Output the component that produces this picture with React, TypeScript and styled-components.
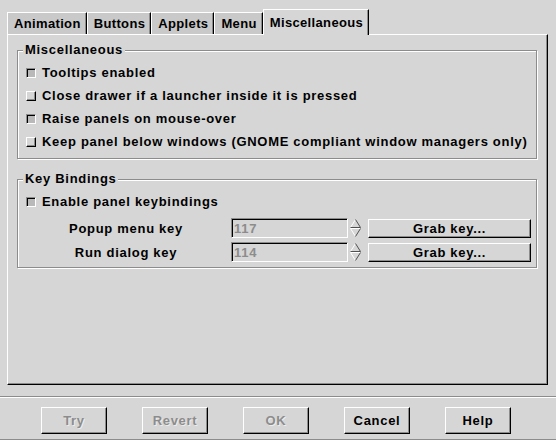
import React from "react";
import styled, { createGlobalStyle, css } from "styled-components";

const GlobalStyle = createGlobalStyle`
  html, body { margin: 0; padding: 0; background: #d6d6d6; }
  body { width: 556px; height: 440px; overflow: hidden; }
`;

const raised = css`
  border: 1px solid;
  border-color: #fff #000 #000 #fff;
  box-shadow: inset -1px -1px 0 #8c8c8c;
  background: #d6d6d6;
`;

const Window = styled.div`
  width: 556px;
  height: 440px;
  box-sizing: border-box;
  display: flex;
  flex-direction: column;
  background: #d6d6d6;
  font-family: "Liberation Sans", Arial, sans-serif;
  font-weight: bold;
  font-size: 13px;
  letter-spacing: 0.7px;
  color: #000;
  border-bottom: 1px solid #8c8c8c;
`;

const Notebook = styled.div`
  padding: 9px 8px 0 7px;
  display: flex;
  flex-direction: column;
`;

const TabRow = styled.div`
  display: flex;
  align-items: flex-end;
  height: 25px;
  letter-spacing: 0.35px;
`;

const Tab = styled.div<{ $active?: boolean }>`
  box-sizing: border-box;
  display: flex;
  align-items: center;
  padding: 0 5px 0 6px;
  border-top: 1px solid #fff;
  border-left: 1px solid #fff;
  border-right: 1px solid #000;
  box-shadow: inset -1px 0 0 #8c8c8c;
  height: ${(p) => (p.$active ? "26px" : "22px")};
  margin-bottom: ${(p) => (p.$active ? "-1px" : "0")};
  background: ${(p) => (p.$active ? "#d6d6d6" : "#c9c9c9")};
  position: relative;
  z-index: ${(p) => (p.$active ? 1 : 0)};
`;

const Panel = styled.div`
  height: 351px;
  box-sizing: border-box;
  border-top: 1px solid #fff;
  border-left: 1px solid #fff;
  border-right: 1px solid #000;
  border-bottom: 1px solid #000;
  box-shadow: inset -1px -1px 0 #8c8c8c;
  padding: 15px 10px 0 9px;
  display: flex;
  flex-direction: column;
`;

const Frame = styled.div<{ $gap?: number }>`
  display: flex;
  flex-direction: column;
  border: 1px solid #8c8c8c;
  box-shadow: inset 1px 1px 0 #fff, 1px 1px 0 #fff;
  padding: 0 5px 5px 8px;
  margin-top: ${(p) => p.$gap ?? 0}px;
`;

const Legend = styled.div`
  align-self: flex-start;
  margin: -8px 0 4px -3px;
  padding: 0 2px;
  height: 14px;
  line-height: 14px;
  background: #d6d6d6;
`;

const CheckRow = styled.div`
  display: flex;
  align-items: center;
  gap: 6px;
  height: 23px;
`;

const Check = styled.span<{ $checked?: boolean }>`
  width: 10px;
  height: 10px;
  box-sizing: border-box;
  flex: none;
  border: 1px solid;
  ${(p) =>
    p.$checked
      ? css`
          border-color: #8c8c8c #fff #fff #8c8c8c;
          box-shadow: inset 1px 1px 0 #000;
          background: #b9b9b9;
        `
      : css`
          border-color: #fff #000 #000 #fff;
          box-shadow: inset -1px -1px 0 #8c8c8c;
          background: #d6d6d6;
        `}
`;

const KeyGrid = styled.div`
  display: grid;
  grid-template-columns: 205px 117px 20px 1fr;
  grid-auto-rows: 20px;
  row-gap: 4px;
  margin-top: 5px;
  align-items: center;
`;

const KeyLabel = styled.div`
  text-align: center;
  padding-right: 5px;
`;

const Entry = styled.div`
  box-sizing: border-box;
  height: 20px;
  border: 1px solid;
  border-color: #8c8c8c #fff #fff #8c8c8c;
  box-shadow: inset 1px 1px 0 #000, inset -1px -1px 0 #d6d6d6;
  padding: 0 1px 0 2px;
  display: flex;
  align-items: center;
  color: #8c8c8c;
`;

const Spin = styled.svg`
  margin-left: 2px;
  display: block;
`;

const GrabButton = styled.div`
  ${raised};
  box-sizing: border-box;
  height: 19px;
  display: flex;
  align-items: center;
  justify-content: center;
`;

const Separator = styled.div`
  margin-top: 11px;
  border-top: 1px solid #8c8c8c;
  border-bottom: 1px solid #fff;
`;

const ButtonRow = styled.div`
  display: flex;
  gap: 35px;
  padding: 9px 0 0 41px;
`;

const DialogButton = styled.div<{ $disabled?: boolean }>`
  ${raised};
  box-sizing: border-box;
  width: 66px;
  height: 27px;
  display: flex;
  align-items: center;
  justify-content: center;
  color: ${(p) => (p.$disabled ? "#8c8c8c" : "#000")};
  text-shadow: ${(p) => (p.$disabled ? "1px 1px 0 #ececec" : "none")};
`;

const SpinArrows = () => (
  <Spin width="11" height="18" viewBox="0 0 11 18" fill="none" strokeWidth="1">
    <path d="M5.5 0.5 L0.5 8.5" stroke="#fff" />
    <path d="M5.5 0.5 L10.5 8.5 L0.5 8.5" stroke="#505050" />
    <path d="M0.5 9.5 L10.5 9.5" stroke="#fff" />
    <path d="M0.5 9.5 L5.5 17.5" stroke="#fff" />
    <path d="M10.5 9.5 L5.5 17.5" stroke="#505050" />
  </Spin>
);

const tabs = ["Animation", "Buttons", "Applets", "Menu", "Miscellaneous"];

const misc = [
  { label: "Tooltips enabled", checked: true },
  { label: "Close drawer if a launcher inside it is pressed", checked: false },
  { label: "Raise panels on mouse-over", checked: true },
  { label: "Keep panel below windows (GNOME compliant window managers only)", checked: false },
];

const keys = [
  { label: "Popup menu key", value: "117" },
  { label: "Run dialog key", value: "114" },
];

const buttons = [
  { label: "Try", disabled: true },
  { label: "Revert", disabled: true },
  { label: "OK", disabled: true },
  { label: "Cancel", disabled: false },
  { label: "Help", disabled: false },
];

export default function App() {
  return (
    <>
      <GlobalStyle />
      <Window>
        <Notebook>
          <TabRow>
            {tabs.map((t) => (
              <Tab key={t} $active={t === "Miscellaneous"}>
                {t}
              </Tab>
            ))}
          </TabRow>
          <Panel>
            <Frame>
              <Legend>Miscellaneous</Legend>
              {misc.map((m) => (
                <CheckRow key={m.label}>
                  <Check $checked={m.checked} />
                  {m.label}
                </CheckRow>
              ))}
            </Frame>
            <Frame $gap={20}>
              <Legend>Key Bindings</Legend>
              <CheckRow>
                <Check $checked />
                Enable panel keybindings
              </CheckRow>
              <KeyGrid>
                {keys.map((k) => (
                  <React.Fragment key={k.label}>
                    <KeyLabel>{k.label}</KeyLabel>
                    <Entry>{k.value}</Entry>
                    <SpinArrows />
                    <GrabButton>Grab key...</GrabButton>
                  </React.Fragment>
                ))}
              </KeyGrid>
            </Frame>
          </Panel>
        </Notebook>
        <Separator />
        <ButtonRow>
          {buttons.map((b) => (
            <DialogButton key={b.label} $disabled={b.disabled}>
              {b.label}
            </DialogButton>
          ))}
        </ButtonRow>
      </Window>
    </>
  );
}
